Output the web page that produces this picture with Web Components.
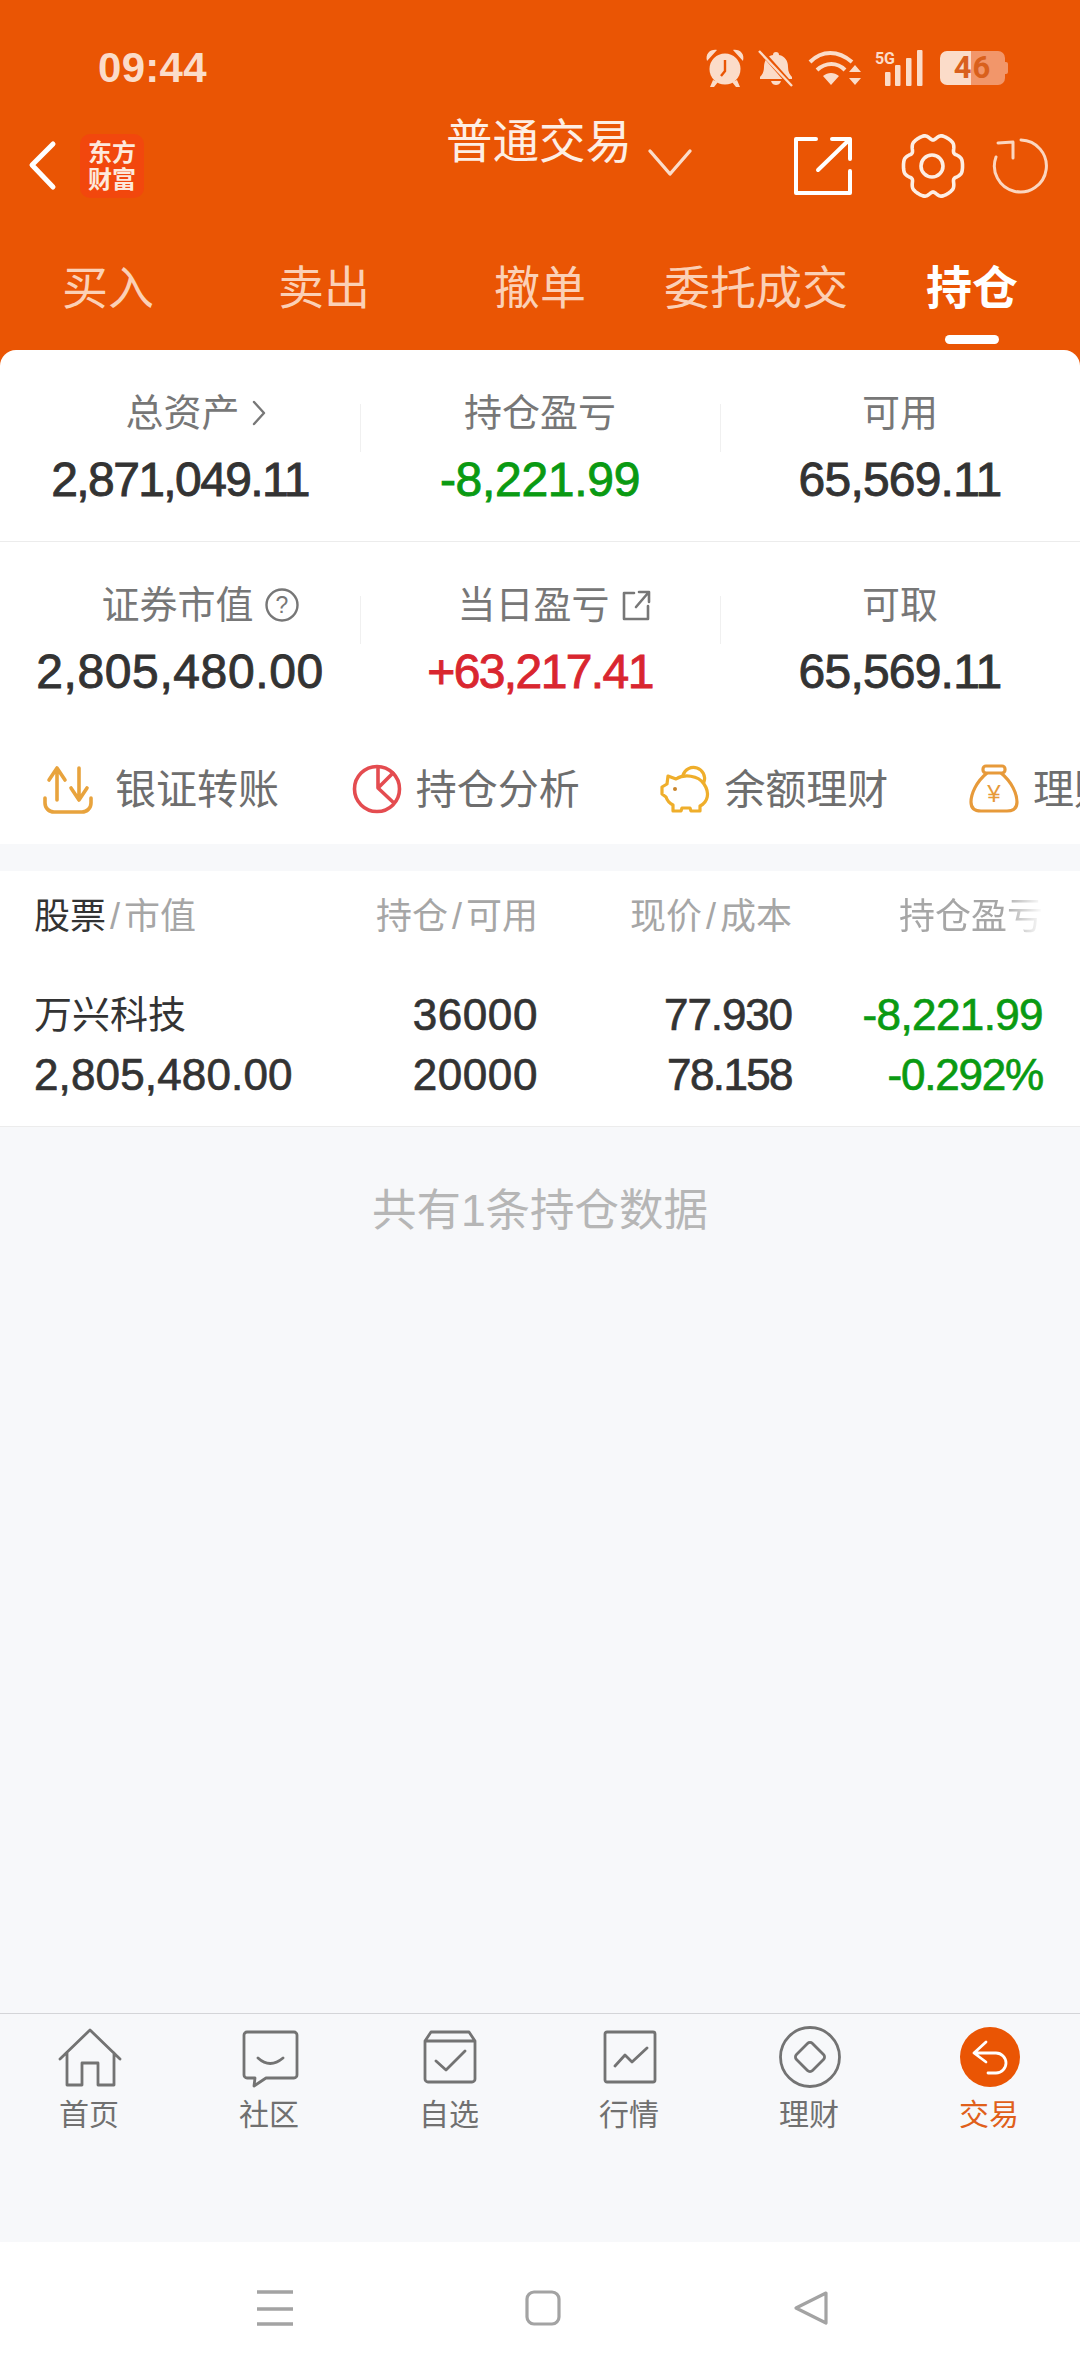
<!DOCTYPE html>
<html lang="zh-CN"><head><meta charset="utf-8"><title>持仓</title>
<style>
html,body{margin:0;padding:0;background:#f7f8fa}
body{font-family:"Liberation Sans","Noto Sans CJK SC",sans-serif;width:1080px;height:2374px;overflow:hidden}
</style></head><body>
<trade-app></trade-app>
<script>
const gear=(()=>{let p=[];for(let i=0;i<144;i++){const t=i/144*2*Math.PI,r=29.5-5.5*Math.pow((1-Math.cos(6*t))/2,3);p.push((31+r*Math.cos(t)).toFixed(1)+' '+(30+1.08*r*Math.sin(t)).toFixed(1))}return 'M'+p.join('L')+'Z'})();
const ICONS={
 back:[30,50,'<path d="M25 3 4 24l21 22" fill="none" stroke="#fff" stroke-width="5" stroke-linecap="round" stroke-linejoin="round"/>'],
 chev:[44,28,'<path d="M2 2 22 25 42 2" fill="none" stroke="#fbdcc9" stroke-width="3.4" stroke-linecap="round" stroke-linejoin="round"/>'],
 share:[60,60,'<path d="M23 3H3v54h54V35M25 34 57 3M39 3h18v20" fill="none" stroke="#fff" stroke-width="4" stroke-linecap="round" stroke-linejoin="round"/>'],
 gear:[62,60,'<g fill="none" stroke="#fdeee4" stroke-width="3.6" stroke-linejoin="round"><path d="'+gear+'"/><circle cx="30" cy="30" r="11"/></g>'],
 refresh:[60,60,'<path d="M31 4A26 26 0 1 1 6 21M8 7l15-1v16" fill="none" stroke="#fbd6c0" stroke-width="3" stroke-linecap="round" stroke-linejoin="round"/>'],
 alarm:[40,40,'<g fill="#fbdcc9"><circle cx="20" cy="21" r="15.5"/><path d="M2 13C0 6 5 1 12 2ZM38 13c2-7-3-12-10-11ZM8 32l-3 7h4l4-5ZM32 32l3 7h-4l-4-5Z"/></g><path d="M20 12v11l-4 5" fill="none" stroke="#ea5504" stroke-width="2.4"/>'],
 bell:[36,36,'<path d="M18 2c2 0 3 1 3 3 6 1 9 6 9 12 0 5 2 8 4 10v2H2v-2c2-2 4-5 4-10 0-6 3-11 9-12 0-2 1-3 3-3ZM13 31h10c-1 3-3 4-5 4s-4-1-5-4Z" fill="#fbdcc9"/><path d="M2 0 33 35" stroke="#ea5504" stroke-width="5"/><path d="M1 1 34 36" stroke="#fbdcc9" stroke-width="2.4"/>'],
 wifi:[54,38,'<g fill="none" stroke="#fbdcc9" stroke-width="4"><path d="M2 13C14 1 30 1 44 13M9 21c9-8 20-8 28 0"/></g><path d="M15 27c5-4 11-4 16 0l-8 9ZM47 16l6 7H41ZM47 36l6-7H41Z" fill="#fbdcc9"/>'],
 bars:[38,36,'<g fill="#fbdcc9"><rect x="0" y="22" width="5.5" height="14" rx="1"/><rect x="10" y="15" width="5.5" height="21" rx="1"/><rect x="21" y="8" width="5.5" height="28" rx="1"/><rect x="32" y="0" width="5.5" height="36" rx="1"/></g>'],
 up:[52,50,'<path d="M14 36V4M6 16 14 4l8 12M36 4v32M28 24l8 12 8-12M2 34v5a9 9 0 0 0 9 9h28a9 9 0 0 0 9-9v-5" fill="none" stroke="#e8a33d" stroke-width="3.6" stroke-linecap="round" stroke-linejoin="round"/>'],
 pie:[50,50,'<g fill="none" stroke="#e44c50" stroke-width="3.6" stroke-linejoin="round"><circle cx="25" cy="25" r="22.5"/><path d="M26 3v21L42 8M26 24l17 16"/></g>'],
 pig:[50,50,'<g fill="none" stroke="#efae2b" stroke-width="3.2" stroke-linejoin="round" stroke-linecap="round"><path d="M8 12l8 3c8-5 22-4 28 5 6 9 4 18-4 22v5h-9l-1-3h-8l-1 3h-8v-6c-4-2-6-5-7-8l-4-3v-7l5-3Z"/><path d="M23 11a11 11 0 1 1 21 7"/></g><circle cx="15" cy="25" r="2" fill="#c9842a"/>'],
 bag:[50,50,'<g fill="none" stroke="#e79a3a" stroke-width="3.2" stroke-linejoin="round"><rect x="14" y="2" width="22" height="7" rx="3"/><path d="M18 9C7 18 2 30 2 38c0 7 5 9 10 9h26c6 0 10-2 10-9 0-8-5-20-16-29"/></g><text x="25" y="38" font-size="24" text-anchor="middle" fill="#e79a3a" font-family="Liberation Sans">¥</text>'],
 home:[64,64,'<path d="M2 33 32 4l30 29M9 27v32h15V37h16v22h16V27" fill="none" stroke="#737373" stroke-width="2.8" stroke-linejoin="round" stroke-linecap="round"/>'],
 chat:[64,64,'<path d="M9 6h47a3 3 0 0 1 3 3v40a3 3 0 0 1-3 3H28l-12 8 1-8H9a3 3 0 0 1-3-3V9a3 3 0 0 1 3-3ZM20 32q12 11 25 0" fill="none" stroke="#737373" stroke-width="2.8" stroke-linejoin="round" stroke-linecap="round"/>'],
 box:[64,64,'<path d="M13 6h38l6 9v38a3 3 0 0 1-3 3H10a3 3 0 0 1-3-3V15ZM7 15h50M18 35l10 9 19-19" fill="none" stroke="#737373" stroke-width="2.8" stroke-linejoin="round" stroke-linecap="round"/>'],
 chart:[64,64,'<path d="M9 6h46a2 2 0 0 1 2 2v46a2 2 0 0 1-2 2H9a2 2 0 0 1-2-2V8a2 2 0 0 1 2-2ZM17 40l10-11 7 7 15-14" fill="none" stroke="#737373" stroke-width="2.8" stroke-linejoin="round" stroke-linecap="round"/>'],
 coin:[64,64,'<g fill="none" stroke="#737373" stroke-width="2.8" stroke-linejoin="round"><circle cx="32" cy="31" r="29.5"/><path d="M29.5 17.5a3.5 3.5 0 0 1 5 0l11 11a3.5 3.5 0 0 1 0 5l-11 11a3.5 3.5 0 0 1-5 0l-11-11a3.5 3.5 0 0 1 0-5Z"/></g>'],
 trade:[64,64,'<circle cx="32" cy="31" r="30" fill="#ea5504"/><path d="M28 16 16 27l12 9M16 27h22a10 10 0 0 1 0 20H30" fill="none" stroke="#fff" stroke-width="2.8" stroke-linejoin="round" stroke-linecap="round"/>'],
 chevr:[16,26,'<path d="M3 2 13 13 3 24" fill="none" stroke="#777" stroke-width="2.4" stroke-linecap="round" stroke-linejoin="round"/>'],
 q:[34,34,'<circle cx="17" cy="17" r="15.5" fill="none" stroke="#777" stroke-width="2.4"/><text x="17" y="25" text-anchor="middle" font-size="23" fill="#777" font-family="Liberation Sans">?</text>'],
 ext:[30,32,'<path d="M13 4H3v26h24V17M15 18 27 4M18 3h10v10" fill="none" stroke="#777" stroke-width="2.6" stroke-linejoin="round" stroke-linecap="round"/>'],
 menu:[36,36,'<path d="M0 2h36M0 19h36M0 34h36" stroke="#a3a3a3" stroke-width="3.4"/>'],
 square:[36,36,'<rect x="2" y="2" width="32" height="32" rx="7" fill="none" stroke="#a3a3a3" stroke-width="3.2"/>'],
 tri:[36,36,'<path d="M33 3 3 18l30 15Z" fill="none" stroke="#a3a3a3" stroke-width="3.2" stroke-linejoin="round"/>']
};
function el(name,css,html,init){customElements.define(name,class extends HTMLElement{
  constructor(){super();const s=this.attachShadow({mode:'open'});s.innerHTML='<style>'+css+'</style>'+html;if(init)init(this,s)}
})}
el('x-icon',':host{display:inline-flex;flex:none;line-height:0}','<span id="i"></span>',(h,s)=>{
  const [w,v,b]=ICONS[h.getAttribute('name')];
  s.getElementById('i').innerHTML=`<svg width="${w}" height="${v}" viewBox="0 0 ${w} ${v}" style="display:block;overflow:visible">${b}</svg>`;
});
el('status-bar',`:host{display:flex;align-items:flex-start;height:118px;padding:34px 0 0 98px;box-sizing:border-box;color:#fbdcc9}
 .t{font-size:42px;font-weight:700;letter-spacing:.3px;line-height:68px;height:68px}
 .r{margin-left:auto;display:flex;align-items:center;height:68px;padding-right:75px}
 .sig{position:relative;display:block;margin-left:13px;width:48px;height:36px}
 .sig b{position:absolute;left:0;top:0;font:700 16px/18px "Roboto",sans-serif;letter-spacing:-.3px}
 .sig x-icon{position:absolute;left:10px;top:0}
 .bat{position:relative;margin-left:17px;width:65px;height:34px;border-radius:7px;background:linear-gradient(90deg,#fbdcc9 0 31px,#f2966a 31px);text-align:center;font:700 31px/34px "Roboto",sans-serif;color:#d9601c;letter-spacing:1px}
 .bat::after{content:"";position:absolute;right:-3px;top:11px;width:3px;height:12px;background:#f2966a;border-radius:0 2px 2px 0}`,
 `<span class="t">09:44</span><div class="r"><x-icon name="alarm"></x-icon><x-icon name="bell" style="margin-left:13px"></x-icon><x-icon name="wifi" style="margin-left:14px"></x-icon><span class="sig"><b>5G</b><x-icon name="bars"></x-icon></span><span class="bat">46</span></div>`);
el('nav-header',`:host{display:flex;align-items:center;height:96px;padding:0 30px 0 28px;box-sizing:border-box;color:#fdeee4}
 .logo{margin-left:22px;width:64px;height:64px;border-radius:10px;background:#f2470d;color:#fde9dc;font-size:24px;line-height:27px;font-weight:700;text-align:center;display:flex;flex-direction:column;justify-content:center}
 .ti{margin-left:302px;display:flex;align-items:center;gap:16px;transform:translateY(-24px)}
 .ti span{font-size:46.5px;line-height:60px;white-space:nowrap}
 .ti x-icon{transform:translateY(21px)}
 .rt{margin-left:auto;display:flex;align-items:center}
 .rt x-icon:nth-child(2){margin-left:49px}
 .rt x-icon:nth-child(3){margin-left:26px}`,
 `<x-icon name="back"></x-icon><div class="logo"><span>东方</span><span>财富</span></div><div class="ti"><span>普通交易</span><x-icon name="chev"></x-icon></div><div class="rt"><x-icon name="share"></x-icon><x-icon name="gear"></x-icon><x-icon name="refresh"></x-icon></div>`);
el('trade-tabs',`:host{display:grid;grid-template-columns:repeat(5,216px);height:136px;box-sizing:border-box}`,`<slot></slot>`);
el('trade-tab',`:host{display:block;position:relative;text-align:center;padding-top:44px;font-size:46px;line-height:60px;color:#fbd0b6;white-space:nowrap}
 :host([active]){color:#fff;font-weight:700}
 :host([active])::after{content:"";position:absolute;left:81px;top:121px;width:54px;height:9px;border-radius:5px;background:#fff}`,`<slot></slot>`);
el('asset-grid',`:host{display:grid;grid-template-columns:repeat(3,1fr);height:192px;box-sizing:border-box;padding-top:38px}
 :host([line]){border-bottom:1px solid #ececec}`,`<slot></slot>`);
el('asset-cell',`:host{display:block;position:relative;text-align:center}
 :host(:not(:first-child))::before{content:"";position:absolute;left:0;top:16px;height:48px;width:1px;background:#f0f0f0}
 .l{display:flex;align-items:center;justify-content:center;gap:11px;height:50px;font-size:38px;line-height:50px;color:#777;padding-left:var(--pl,0)}
 .v{margin-top:10px;height:64px;font-size:48px;line-height:64px;color:var(--c,#333);-webkit-text-stroke:.9px var(--c,#333);letter-spacing:var(--ls,-1px);white-space:nowrap}`,
 `<div class="l"><slot name="l"></slot></div><div class="v"><slot></slot></div>`);
el('quick-actions',`:host{display:flex;height:110px;overflow:hidden;padding-left:43px;box-sizing:border-box;background:#fff}`,`<slot></slot>`);
el('quick-action',`:host{flex:none;width:308.7px;display:flex;align-items:center;gap:var(--g,14px);font-size:41px;color:#6e6e6e;white-space:nowrap}
 ::slotted(span){margin-bottom:6px}`,`<slot></slot>`);
el('position-table',`:host{display:block;margin-top:27px;background:#fff;border-bottom:1px solid #ececec;padding:21px 37px 0 34px;box-sizing:border-box;height:256px}
 .g{display:grid;grid-template-columns:254px 250px 254px 251px;grid-auto-rows:auto}`,`<div class="g"><slot></slot></div>`);
el('pt-head',`:host{display:block;text-align:right;height:93px;line-height:50px;font-size:36px;color:#a6a6a6;white-space:nowrap}
 :host([first]){text-align:left}
 :host([fade]){-webkit-mask-image:linear-gradient(90deg,#000 84%,transparent 100%);mask-image:linear-gradient(90deg,#000 84%,transparent 100%)}
 ::slotted(b){font-weight:400;color:#333}
 ::slotted(i){font-style:normal;margin:0 4px}`,`<slot></slot>`);
el('pt-cell',`:host{display:block;text-align:right;height:60px;line-height:60px;font-size:44px;color:var(--c,#333);-webkit-text-stroke:.7px var(--c,#333);letter-spacing:var(--ls,-.6px);white-space:nowrap}
 :host([first]){text-align:left}
 :host([cjk]){font-size:38px;-webkit-text-stroke:0;letter-spacing:0}`,`<slot></slot>`);
el('empty-note',`:host{display:block;text-align:center;padding-top:56px;font-size:44.5px;line-height:56px;color:#b6b6b6}`,`<slot></slot>`);
el('tab-bar',`:host{display:grid;grid-template-columns:repeat(6,180px);height:229px;box-sizing:border-box;border-top:1px solid #d4d5d8;background:#f7f8fa;padding-top:12px}`,`<slot></slot>`);
el('tab-item',`:host{display:flex;flex-direction:column;align-items:center;font-size:30px;line-height:40px;color:#707070}
 :host([active]){color:#e0601a}
 span{margin:5px 2px 0 0}`,`<slot name="i"></slot><span><slot></slot></span>`);
el('system-nav',`:host{display:flex;gap:232px;height:132px;box-sizing:border-box;background:#fff;padding:48px 0 0 257px}`,`<slot></slot>`);
el('trade-app',`:host{display:flex;flex-direction:column;height:2374px;width:1080px;background:linear-gradient(#ea5504 0 370px,#f7f8fa 370px)}
 .top{height:350px;flex:none}
 .card{background:#fff;border-radius:16px 16px 0 0;flex:none}
 .sp{flex:1}`,`
 <div class="top"><status-bar></status-bar><nav-header></nav-header><trade-tabs><trade-tab>买入</trade-tab><trade-tab>卖出</trade-tab><trade-tab>撤单</trade-tab><trade-tab>委托成交</trade-tab><trade-tab active>持仓</trade-tab></trade-tabs></div>
 <div class="card">
  <asset-grid line>
   <asset-cell style="--ls:-1.6px;--pl:32px"><span slot="l">总资产</span><x-icon slot="l" name="chevr"></x-icon>2,871,049.11</asset-cell>
   <asset-cell style="--c:#0a9a12;--ls:-.3px"><span slot="l">持仓盈亏</span>-8,221.99</asset-cell>
   <asset-cell style="--ls:-.8px"><span slot="l">可用</span>65,569.11</asset-cell>
  </asset-grid>
  <asset-grid>
   <asset-cell style="--ls:.6px;--pl:40px"><span slot="l">证券市值</span><x-icon slot="l" name="q"></x-icon>2,805,480.00</asset-cell>
   <asset-cell style="--c:#d9262f;--ls:-1.6px;--pl:28px"><span slot="l">当日盈亏</span><x-icon slot="l" name="ext"></x-icon>+63,217.41</asset-cell>
   <asset-cell style="--ls:-.8px"><span slot="l">可取</span>65,569.11</asset-cell>
  </asset-grid>
 </div>
 <quick-actions>
  <quick-action style="--g:20px"><x-icon name="up"></x-icon><span>银证转账</span></quick-action>
  <quick-action><x-icon name="pie"></x-icon><span>持仓分析</span></quick-action>
  <quick-action><x-icon name="pig"></x-icon><span>余额理财</span></quick-action>
  <quick-action><x-icon name="bag"></x-icon><span>理财</span></quick-action>
 </quick-actions>
 <position-table>
  <pt-head first><b>股票</b><i>/</i>市值</pt-head><pt-head>持仓<i>/</i>可用</pt-head><pt-head>现价<i>/</i>成本</pt-head><pt-head fade>持仓盈亏</pt-head>
  <pt-cell first cjk>万兴科技</pt-cell><pt-cell style="--ls:.6px">36000</pt-cell><pt-cell style="--ls:-1.1px">77.930</pt-cell><pt-cell style="--c:#0a9a12">-8,221.99</pt-cell>
  <pt-cell first style="--ls:.15px">2,805,480.00</pt-cell><pt-cell style="--ls:.6px">20000</pt-cell><pt-cell style="--ls:-1.6px">78.158</pt-cell><pt-cell style="--c:#0a9a12;--ls:-1.2px">-0.292%</pt-cell>
 </position-table>
 <empty-note>共有1条持仓数据</empty-note>
 <div class="sp"></div>
 <tab-bar>
  <tab-item><x-icon slot="i" name="home"></x-icon>首页</tab-item>
  <tab-item><x-icon slot="i" name="chat"></x-icon>社区</tab-item>
  <tab-item><x-icon slot="i" name="box"></x-icon>自选</tab-item>
  <tab-item><x-icon slot="i" name="chart"></x-icon>行情</tab-item>
  <tab-item><x-icon slot="i" name="coin"></x-icon>理财</tab-item>
  <tab-item active><x-icon slot="i" name="trade"></x-icon>交易</tab-item>
 </tab-bar>
 <system-nav><x-icon name="menu"></x-icon><x-icon name="square"></x-icon><x-icon name="tri"></x-icon></system-nav>`);
</script>
</body></html>
